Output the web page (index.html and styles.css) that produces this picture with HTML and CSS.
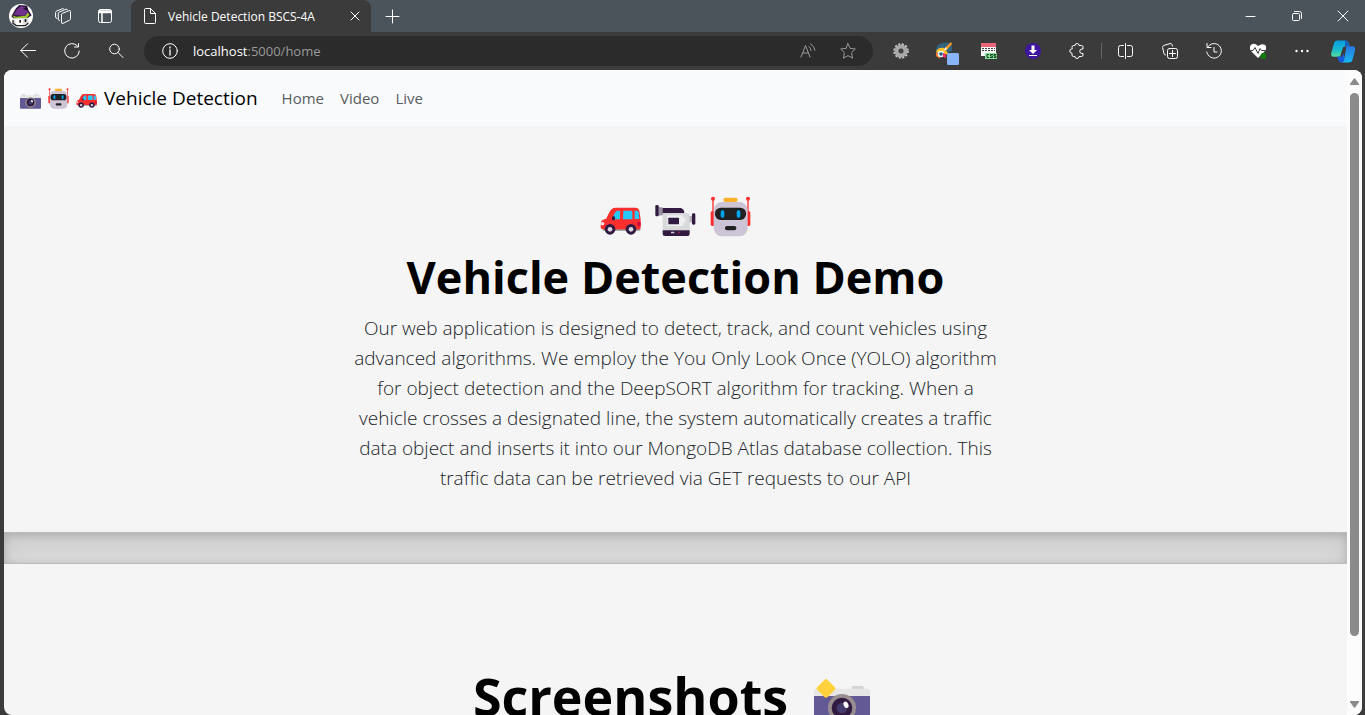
FILE: index.html
```html
<!DOCTYPE html>
<html lang="en">
<head>
<meta charset="utf-8">
<meta name="viewport" content="width=device-width, initial-scale=1">
<title>Vehicle Detection BSCS-4A</title>
<link rel="stylesheet" href="styles.css">
</head>
<body>
<svg class="defs" aria-hidden="true">
  <symbol id="car" viewBox="30 32 123 123">
    <path d="M38 130h113v6H40z" fill="#998f91"/>
    <path d="M33 110q3-8 15-9l10-20q6-14 18-14h60q10 0 12 9l4 26v26q0 4-5 4H37q-5 0-5-6z" fill="#fb302e"/>
    <path d="M66 100l9-18q3-6 8-6h7v26H68zM100 76h23q4 0 4 4v22h-28zM134 76h7q4 0 5 5l2 20h-14z" fill="#26c9fc"/>
    <rect x="66" y="93" width="9" height="12" rx="4" fill="#321b41"/>
    <rect x="32" y="110" width="11" height="10" rx="5" fill="#f6dce0"/><rect x="142" y="109" width="10" height="14" rx="4" fill="#c70a3f"/>
    <circle cx="60" cy="132" r="16" fill="#321b41"/><circle cx="60" cy="132" r="7" fill="#ded7e4"/>
    <circle cx="123" cy="132" r="16" fill="#321b41"/><circle cx="123" cy="132" r="7" fill="#ded7e4"/>
  </symbol>
  <symbol id="video" viewBox="195 32 123 123">
    <path d="M205 64l14 3v22l-14 2z" fill="#998ea2"/>
    <rect x="196" y="59" width="10" height="34" rx="4" fill="#321b41"/>
    <path d="M218 68h54q11 3 11 16H218z" fill="#321b41"/>
    <rect x="295" y="92" width="13" height="19" fill="#b4acb9"/><rect x="306" y="84" width="10" height="34" rx="4" fill="#321b41"/>
    <path d="M218 84h76q5 0 5 5v46h-81z" fill="#d9d9dc"/>
    <path d="M232 90h42q7 0 7 9h5v14h-5q0 9-7 9h-42z" fill="#eeeef0"/><rect x="235" y="97" width="32" height="20" rx="2" fill="#321b41"/>
    <path d="M218 135h81v10q0 7-7 7h-67q-7 0-7-7z" fill="#321b41"/>
    <rect x="243" y="139" width="10" height="5" rx="2" fill="#d8d3dc"/><rect x="264" y="139" width="6" height="5" fill="#8f1a50"/>
  </symbol>
  <symbol id="robot" viewBox="360 32 123 123">
    <path d="M367 40h4v45h-4zM472 40h4v45h-4z" fill="#fb302e"/>
    <circle cx="369" cy="40" r="6" fill="#fb302e"/><circle cx="474" cy="40" r="6" fill="#fb302e"/>
    <rect x="362" y="77" width="12" height="45" rx="5" fill="#fb302e"/><rect x="469" y="77" width="12" height="45" rx="5" fill="#fb302e"/>
    <rect x="371" y="50" width="102" height="103" rx="25" fill="#cdc4d6"/>
    <rect x="400" y="37" width="43" height="13" rx="6" fill="#ffb02e"/>
    <rect x="375" y="67" width="93" height="37" rx="17" fill="#212121"/>
    <rect x="392" y="75" width="11" height="22" rx="5" fill="#00a6ed"/><rect x="440" y="75" width="11" height="22" rx="5" fill="#00a6ed"/>
    <rect x="405" y="122" width="34" height="13" rx="6" fill="#212121"/>
  </symbol>
  <g id="camera-body">
    <rect x="1170" y="138" width="36" height="14" rx="4" fill="#d3d3d3"/>
    <path d="M1057 168v-13q0-9 9-9h151q8 0 8 9v13z" fill="#e6e6e6"/>
    <path d="M1057 168h168v78q0 8-8 8h-152q-8 0-8-8z" fill="#635994"/>
    <circle cx="1141" cy="204" r="42" fill="#998f91"/><circle cx="1141" cy="204" r="31" fill="#321b41"/>
    <circle cx="1141" cy="204" r="16" fill="#433b6b"/><ellipse cx="1153" cy="194" rx="7" ry="10" fill="#fff" transform="rotate(-25 1153 194)"/>
  </g>
  <symbol id="camera" viewBox="1057 89 168 168">
    <use href="#camera-body"/><rect x="1074" y="138" width="26" height="12" rx="4" fill="#d3d3d3"/>
  </symbol>
  <symbol id="flash-camera" viewBox="1057 117 168 168">
    <use href="#camera-body"/><path d="M1088 120q5-6 10 0l21 21q5 5 0 9l-21 21q-5 5-10 0l-21-21q-5-4 0-9z" fill="#ffd23d"/>
  </symbol>
</svg>

<header class="browser">
  <div class="tabs">
    <button class="tool" aria-label="Profile"><svg class="avatar" viewBox="0 0 72 72"><circle cx="36" cy="36" r="36" fill="#fff"/><path d="M7 37L21 13 31 3l23 2 5 15 9 14-11 7-42 3z" fill="#24122e"/><path d="M13 33l12-18 10-9 16 4-9 4 14 7 4 8-16 6z" fill="#71328d"/><path d="M9 34l13 4 27-3 8-9 5 6-9 10-16 4-22-5z" fill="#9ac52b"/><path d="M14 43l43-1 2 15-9 9H25l-11-8z" fill="#ddd"/><path d="M18 45h24v18H22z" fill="#fff"/><path d="M31 48h5v8h-5zM47 45h5v9h-5z" fill="#222"/><path d="M12 48v10l10 7h27l9-8" fill="none" stroke="#222" stroke-width="4"/></svg></button>
    <button class="tool" aria-label="Workspaces"><svg class="icon" viewBox="0 0 16 16"><path d="M6.500 6.500q0-.8.700-1.100l7-2.800q1.300-.4 1.300.9v7.300q0 .8-.7 1.200l-6.800 3.400q-1.500.6-1.500-.9zM4.500 12.500q-1.200 0-1.200-1.200V5.500q0-.9.800-1.300L11 1.200q1-.4 1.400.5M2 10.500q-1.400-.2-1.400-1.500V4.500q0-.9.800-1.300L7.500.700q1-.3 1.400.3"/></svg></button>
    <button class="tool" aria-label="Tab actions"><svg class="icon" viewBox="0 0 16 16"><rect x="1.500" y="1.500" width="13" height="13" rx="2"/><path d="M2 3h12M5 5v9M2 4.500h12" stroke-width="1.500"/></svg></button>
    <div class="tab">
      <svg class="icon" viewBox="0 0 16 16"><path d="M2.500 1.500q0-1 1-1h5l5 5v9q0 1-1 1h-9q-1 0-1-1zM8.500.500v5h5"/></svg>
      <span class="tab-title">Vehicle Detection BSCS-4A</span>
      <button class="close" aria-label="Close tab"><svg class="icon" viewBox="0 0 16 16"><path d="M4 4l8 8M12 4l-8 8"/></svg></button>
    </div>
    <button class="tool" aria-label="New tab"><svg class="icon" viewBox="0 0 16 16"><path d="M8.500 2v13M2 8.500h13"/></svg></button>
    <div class="window-controls">
      <button aria-label="Minimize"><svg class="icon" viewBox="0 0 16 16"><path d="M4 8.500h9"/></svg></button>
      <button aria-label="Restore"><svg class="icon" viewBox="0 0 16 16"><rect x="4.500" y="5.500" width="7" height="7" rx="1"/><path d="M6.500 3.500h5q2 0 2 2v5"/></svg></button>
      <button aria-label="Close"><svg class="icon" viewBox="0 0 16 16"><path d="M4 3l10 10M14 3L4 13"/></svg></button>
    </div>
  </div>
  <div class="toolbar">
    <button class="tool" aria-label="Back"><svg class="icon" viewBox="0 0 16 16"><path d="M15.500 7.500H.800M7.500.800L.800 7.500l6.700 6.700"/></svg></button>
    <button class="tool" aria-label="Refresh"><svg class="icon" viewBox="0 0 16 16"><path d="M13.500 3A7.300 7.300 0 1 0 15.300 8M14.500.500V4h-4"/></svg></button>
    <button class="tool" aria-label="Search"><svg class="icon" viewBox="0 0 16 16"><circle cx="6.500" cy="6" r="4.800"/><path d="M10 9.500l5 5"/></svg></button>
    <form class="address">
      <svg class="icon" viewBox="0 0 16 16"><circle cx="8" cy="8" r="7.300"/><path d="M8 7v5M8 4v1" stroke-width="1.300"/></svg>
      <a class="url" href="#"><span class="host">localhost</span>:5000/home</a>
      <button type="button" class="dim" aria-label="Read aloud"><svg class="icon" viewBox="0 0 16 16"><path d="M1 14L5.500 2.500 10 14M2.500 10h6M9 3.500q2 1.500 2 4M10.500.800q4 2 4.500 6.500"/></svg></button>
      <button type="button" class="dim" aria-label="Favorite"><svg class="icon" viewBox="0 0 16 16"><path d="M8 .700l2.200 4.700 5.100.600-3.700 3.700.900 5.500L8 12.600l-4.500 2.600.900-5.500L.700 6l5.100-.600z"/></svg></button>
    </form>
    <button class="tool" aria-label="Settings extension"><svg class="glyph" viewBox="0 0 16 16"><circle cx="8" cy="8" r="6.500" fill="none" stroke="#c9c9c9" stroke-width="2.500" stroke-dasharray="2 1.400"/><circle cx="8" cy="8" r="4.500" fill="none" stroke="#a8a8a8" stroke-width="4"/><circle cx="8" cy="8" r="2" fill="#444"/></svg></button>
    <button class="tool" aria-label="Color picker"><svg class="glyph picker" viewBox="0 0 24 24"><path d="M1 12Q0 3 8 2q9-2 9 5v3l-8 3z" fill="#31647f"/><path d="M1 11q2-5 8-4l4 5-4 4-5-4z" fill="#ffc320"/><path d="M1 11l3 3 1 4-4-3z" fill="#f97929"/><circle cx="6" cy="13" r="3.300" fill="#eef5fa"/><circle cx="6" cy="13" r="1.800" fill="#235a78"/><path d="M8 12l3 1v4l-3-1z" fill="#ed2b66"/><path d="M8 10l3-4 5-5 1 2-5 6z" fill="#ff9726"/><path d="M8 10l3-4 1 2z" fill="#fff"/><rect x="12" y="12" width="12" height="12" rx="1.500" fill="#8ab4f8"/></svg></button>
    <button class="tool" aria-label="CSS viewer"><svg class="glyph" viewBox="0 0 16 16"><path d="M0 0h15v13H0z" fill="#f5f5f5"/><path d="M0 0h15v4H0z" fill="#e96577"/><path d="M1 5.500h13M1 7.500h13" fill="none" stroke="#444" stroke-dasharray="2 1"/><path d="M4 10h12v6H4z" fill="#87dc99"/><path d="M8 11.500H6v3h2M12 11.500H9.500v1.500h2v1.500H9M15.500 11.500h-2.500v1.500h2v1.500h-2" fill="none" stroke="#174a24"/></svg></button>
    <button class="tool" aria-label="Downloader"><svg class="glyph" viewBox="0 0 16 16"><circle cx="8" cy="8" r="8" fill="#3f169e"/><path d="M6.500 2.500h3V7H12l-4 4-4-4h2.500zM4 12h8v1H4z" fill="#fff"/></svg></button>
    <button class="tool" aria-label="Extensions"><svg class="icon" viewBox="0 0 16 16"><path d="M3 4q0-1.500 1.500-1.500H6a2 2 0 0 1 4 0h2.500Q14 2.500 14 4v2h-1a2 2 0 0 0 0 4.500h1v1.500q0 1.500-1.500 1.500H10a2 2 0 0 1-4 0H4.500Q3 13.500 3 12v-1.800a2.200 2.200 0 0 1 0-4.400z"/></svg></button>
    <span class="separator"></span>
    <button class="tool" aria-label="Split screen"><svg class="icon" viewBox="0 0 16 16"><path d="M7.500.500v15M5.500 2.500h-3q-2 0-2 2v7q0 2 2 2h3M9.500 2.500h3q2 0 2 2v7q0 2-2 2h-3"/></svg></button>
    <button class="tool" aria-label="Collections"><svg class="icon" viewBox="0 0 16 16"><path d="M3.500 12q-1.200 0-1.500-1.300L.600 4.500q-.2-1.500 1-2L8 .600q1.500-.3 2 1L10.500 3"/><rect x="5.500" y="5.500" width="10" height="10" rx="2"/><path d="M10.500 7.500v6M7.500 10.500h6"/></svg></button>
    <button class="tool" aria-label="History"><svg class="icon" viewBox="0 0 16 16"><path d="M1.500 4.500A7.300 7.300 0 1 1 .800 9M1 .500v4h4M8 4.500V9h3"/></svg></button>
    <button class="tool" aria-label="Browser essentials"><svg class="glyph" viewBox="0 0 16 16"><path d="M8 3Q4-1 1 2t0 6l7 7 7-7q3-4 0-6T8 3z" fill="#fff"/><path d="M0 7.500h3l2-3 3 6 2-5 1.500 2H16" fill="none" stroke="#3b3b3b"/><circle cx="13.500" cy="13" r="3" fill="#107c10"/></svg></button>
    <button class="tool" aria-label="More"><svg class="glyph" viewBox="0 0 16 16" fill="#fff"><circle cx="2.500" cy="8" r="1.200"/><circle cx="8" cy="8" r="1.200"/><circle cx="13.500" cy="8" r="1.200"/></svg></button>
    <button class="copilot" aria-label="Copilot"><svg viewBox="0 0 72 68"><defs><linearGradient id="teal" x2="0" y2="1"><stop stop-color="#0b9cdf"/><stop offset=".55" stop-color="#18b9cf"/><stop offset="1" stop-color="#59da9a"/></linearGradient><linearGradient id="blue" x2="0" y2="1"><stop stop-color="#2877df"/><stop offset="1" stop-color="#18b8f4"/></linearGradient></defs><path d="M10 6q2-5 9-5h25q7 0 9 8l3 9H44q-8 0-10 9l-7 23H8Q-2 50 1 38z" fill="url(#teal)"/><path d="M42 1q9 0 11 8l3 9H42z" fill="#1760bd"/><path d="M46 18h19q10 0 7 13l-8 29q-2 7-10 7H30q7-1 9-9l6-31z" fill="url(#blue)"/><path d="M18 49h14l6-10 2 19q-2 9-9 9-7 0-9-8z" fill="#155bdd"/></svg></button>
  </div>
</header>

<div class="viewport">
  <div class="page">
    <nav class="navbar">
      <a class="brand" href="#"><svg><use href="#camera"/></svg><svg><use href="#robot"/></svg><svg><use href="#car"/></svg><span>Vehicle Detection</span></a>
      <a href="#">Home</a><a href="#">Video</a><a href="#">Live</a>
    </nav>
    <main>
      <section class="hero">
        <div class="hero-icons"><svg><use href="#car"/></svg><svg><use href="#video"/></svg><svg><use href="#robot"/></svg></div>
        <h1>Vehicle Detection Demo</h1>
        <p>Our web application is designed to detect, track, and count vehicles using<br>advanced algorithms. We employ the You Only Look Once (YOLO) algorithm<br>for object detection and the DeepSORT algorithm for tracking. When a<br>vehicle crosses a designated line, the system automatically creates a traffic<br>data object and inserts it into our MongoDB Atlas database collection. This<br>traffic data can be retrieved via GET requests to our API</p>
      </section>
      <div class="divider"></div>
      <section class="screenshots">
        <h2>Screenshots</h2><svg><use href="#flash-camera"/></svg>
      </section>
    </main>
  </div>
  <div class="scrollbar" aria-hidden="true">
    <svg class="up" viewBox="0 0 9 7"><path d="M3.500 1q1-1.500 2 0L9 6v1H0V6z"/></svg>
    <span class="thumb"></span>
    <span class="track"></span>
    <svg class="down" viewBox="0 0 9 7"><path d="M3.500 6q1 1.500 2 0L9 1V0H0v1z"/></svg>
  </div>
</div>
</body>
</html>
```

FILE: styles.css
```css
* { box-sizing: border-box; }

body {
  margin: 0;
  height: 100vh;
  display: flex;
  flex-direction: column;
  overflow: hidden;
  background: #3b3b3b;
  font-family: "Open Sans", "Noto Sans", sans-serif;
}

a { color: inherit; text-decoration: none; }
button { padding: 0; border: 0; background: none; color: inherit; font: inherit; }
svg { display: block; flex: none; }
.defs { width: 0; height: 0; position: absolute; }

.browser { flex: none; color: #fff; }
.tabs { display: flex; height: 32px; background: #4c545b; }
.tool { width: 44px; flex: none; display: flex; align-items: center; justify-content: center; }
.tabs .tool { width: 42px; }
.icon { width: 16px; height: 16px; fill: none; stroke: currentColor; stroke-linecap: round; stroke-linejoin: round; }
.glyph { width: 16px; height: 16px; }
.picker { width: 24px; height: 24px; margin-top: 4px; margin-left: 4px; }
.avatar { width: 24px; height: 24px; }

.tab {
  display: flex;
  align-items: center;
  width: 240px;
  margin-left: 5px;
  padding: 0 8px 0 11px;
  border-radius: 8px 8px 0 0;
  background: #3b3b3b;
}
.tab-title { flex: 1; margin-left: 10px; font-size: 12px; white-space: nowrap; }
.close { display: flex; }
.window-controls { display: flex; margin-left: auto; }
.window-controls button { width: 46px; display: flex; align-items: center; justify-content: center; }

.toolbar { display: flex; height: 38px; padding: 0 3px 0 6px; }
.address {
  flex: 1;
  display: flex;
  align-items: center;
  min-width: 0;
  margin: 4px 6px;
  padding: 0 5px 0 18px;
  border-radius: 15px;
  background: #2b2b2b;
}
.url { flex: 1; margin-left: 15px; color: #9a9a9a; font-size: 13px; }
.host { color: #fff; }
.dim { width: 40px; display: flex; justify-content: center; color: #9a9a9a; }
.separator { width: 1px; height: 16px; margin: 11px 2px; background: #666; }
.copilot { width: 38px; display: flex; align-items: center; justify-content: center; }
.copilot svg { width: 24px; height: 23px; }

.viewport {
  flex: 1;
  min-height: 0;
  display: flex;
  margin: 0 3px 0 4px;
  overflow: hidden;
  border-radius: 8px;
  background: #f5f5f5;
}
.page { flex: 1; min-width: 0; overflow: hidden; }

.navbar {
  display: flex;
  align-items: center;
  gap: 16px;
  height: 56px;
  padding: 0 16px;
  background: #f8fafc;
  color: #5b5d5f;
  font-size: 15px;
}
.brand { display: flex; align-items: center; gap: 7px; margin-right: 8px; color: #000; font-size: 19px; }
.brand svg { width: 21px; height: 21px; }

.hero { padding: 70px 16px 39px; text-align: center; }
.hero-icons { display: flex; justify-content: center; gap: 14px; }
.hero-icons svg { width: 41px; height: 41px; }
h1, h2 { margin: 0; color: #000; font-weight: 700; white-space: nowrap; }
h1 { margin-top: 11px; font-size: 45px; line-height: 58px; }
.hero p { margin: 7px 0 0; color: #212529; font-size: 19px; font-weight: 300; line-height: 30px; }

.divider {
  height: 32px;
  border: solid rgba(0, 0, 0, .15);
  border-width: 1px 0;
  background: rgba(0, 0, 0, .1);
  box-shadow: inset 0 8px 24px rgba(0, 0, 0, .1), inset 0 2px 8px rgba(0, 0, 0, .15);
}

.screenshots { display: flex; justify-content: center; gap: 26px; padding: 96px 16px 0 8px; }
.screenshots h2 { font-size: 52px; line-height: 72px; }
.screenshots svg { width: 56px; height: 56px; margin-top: 19px; }

.scrollbar { width: 15px; display: flex; flex-direction: column; align-items: center; background: #fcfcfc; fill: #8b8b8b; }
.up, .down { width: 9px; height: 7px; }
.up { margin: 8px 0; }
.down { margin: 3px 0 7px; }
.thumb { flex: 543; width: 9px; border-radius: 5px; background: #8b8b8b; }
.track { flex: 62; }
```
